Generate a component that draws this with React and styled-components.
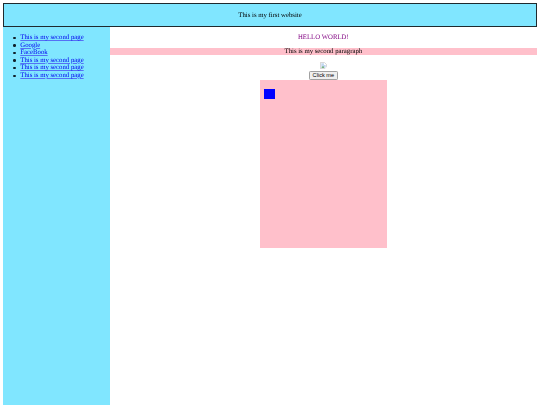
import React from "react";
import styled, { createGlobalStyle } from "styled-components";

const Global = createGlobalStyle`
  html, body { margin: 0; padding: 0; background: #fff; }
  body { font-family: "Liberation Serif", "Times New Roman", serif; font-size: 6.75px; color: #000; text-rendering: geometricPrecision; }
`;
const Page = styled.div`
  width: 540px; height: 405px; overflow: hidden; box-sizing: border-box;
  padding: 3.4px 3.4px 0;
  display: flex; flex-direction: column;
  filter: blur(0.3px);
`;
const Header = styled.header`
  height: 23.4px; box-sizing: border-box; flex: none;
  background: #80e6ff; border: 1px solid #1f2a2e;
  display: flex; align-items: center; justify-content: center;
`;
const Body = styled.div`display: flex; flex: 1; min-height: 0;`;
const Sidebar = styled.nav`
  width: 106.7px; flex: none; background: #80e6ff; box-sizing: border-box; padding-top: 7.2px;
`;
const List = styled.ul`margin: 0; padding: 0 0 0 16.9px; line-height: 7.6px; list-style: none;`;
const Item = styled.li`
  position: relative;
  &::before {
    content: ""; position: absolute; left: -6.9px; top: 2.7px;
    width: 2.4px; height: 2.4px; border-radius: 50%; background: #10202a;
  }
`;
const Link = styled.a`color: #0000ee; text-decoration: underline; text-decoration-color: #5570f5;`;
const Main = styled.main`
  flex: 1; display: flex; flex-direction: column; align-items: center; padding-top: 6.75px;
`;
const Heading = styled.p`margin: 0; color: #800080; line-height: 7.6px; height: 7.6px;`;
const Paragraph = styled.p`
  margin: 6.75px 0; align-self: stretch; text-align: center; background: #ffc0cb; line-height: 7.6px;
`;
const Broken = styled.svg`display: block; width: 7px; height: 7px; flex: none;`;
const Button = styled.button`
  font-family: "Liberation Sans", Arial, sans-serif; font-size: 5.6px; line-height: 6.4px;
  margin: 1.8px 0 0; padding: 0.4px 2.5px; height: 8.6px; box-sizing: border-box;
  background: #efefef; border: 0.5px solid #a0a0a0; border-radius: 1.2px; color: #000;
`;
const Box = styled.div`
  width: 126.6px; height: 168.8px; background: #ffc0cb; flex: none; box-sizing: border-box; padding: 9px 4.2px;
`;
const Square = styled.div`width: 10.6px; height: 10.6px; background: #0000ff;`;

const links = [
  "This is my second page", "Google", "FaceBook",
  "This is my second page", "This is my second page", "This is my second page",
];

export default function App() {
  return (
    <Page>
      <Global />
      <Header>This is my first website</Header>
      <Body>
        <Sidebar>
          <List>
            {links.map((t, i) => <Item key={i}><Link href="#">{t}</Link></Item>)}
          </List>
        </Sidebar>
        <Main>
          <Heading>HELLO WORLD!</Heading>
          <Paragraph>This is my second paragraph</Paragraph>
          <Broken viewBox="0 0 16 16" aria-label="broken image">
            <path d="M1 1h9l5 5v9H1z" fill="#fff" stroke="#a0a0a0" />
            <path d="M3 3h6v4h4v6H3z" fill="#c3d7f0" />
            <path d="M3 13l4-4 3 4z" fill="#5aa55a" />
            <path d="M11 16l5-6v6z" fill="#fff" />
          </Broken>
          <Button>Click me</Button>
          <Box><Square /></Box>
        </Main>
      </Body>
    </Page>
  );
}
